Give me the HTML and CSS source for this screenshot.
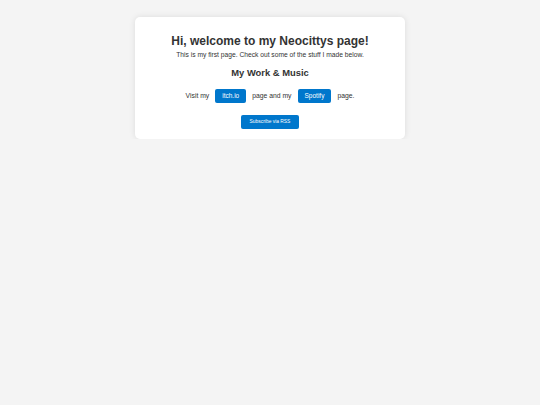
FILE: index.html
```html
<!DOCTYPE html>
<html lang="en">
<head>
<meta charset="utf-8">
<title>Neocittys</title>
<link rel="stylesheet" href="styles.css">
</head>
<body>
<main class="card">
  <h1 class="title">Hi, welcome to my Neocittys page!</h1>
  <p class="intro">This is my first page. Check out some of the stuff I made below.</p>
  <h2 class="subtitle">My Work &amp; Music</h2>
  <div class="links">
    <span>Visit my</span>
    <a class="btn" href="#">itch.io</a>
    <span>page and my</span>
    <a class="btn" href="#">Spotify</a>
    <span>page.</span>
  </div>
  <div class="rss-row">
    <a class="btn-rss" href="#">Subscribe via RSS</a>
  </div>
</main>
</body>
</html>
```
FILE: styles.css
```css
html, body {
  margin: 0;
  padding: 0;
}
body {
  background: #f4f4f4;
  color: #333;
  font-family: "Liberation Sans", Arial, sans-serif;
  padding-top: 17px;
}
.card {
  width: 270px;
  margin: 0 auto;
  background: #fff;
  border-radius: 5px;
  box-shadow: 0 0 6px rgba(0, 0, 0, 0.1);
  text-align: center;
  padding: 16.5px 0 10.3px;
  display: flex;
  flex-direction: column;
  align-items: center;
}
.title {
  margin: 0;
  font-size: 12px;
  line-height: 14px;
  font-weight: bold;
}
.intro {
  margin: 3.7px 0 0;
  font-size: 6.7px;
  line-height: 8px;
}
.subtitle {
  margin: 8px 0 0;
  font-size: 9.4px;
  line-height: 11px;
  font-weight: bold;
}
.links {
  margin-top: 10.5px;
  display: flex;
  align-items: center;
  justify-content: center;
  gap: 6px;
  font-size: 6.8px;
}
.btn {
  display: block;
  background: #0077cc;
  color: #fff;
  text-decoration: none;
  font-size: 6.5px;
  line-height: 14px;
  height: 14px;
  padding: 0 7px;
  border-radius: 2px;
}
.rss-row {
  margin-top: 12.6px;
  display: flex;
  justify-content: center;
}
.btn-rss {
  display: block;
  background: #0077cc;
  color: #fff;
  text-decoration: none;
  font-size: 4.9px;
  line-height: 13.4px;
  height: 13.4px;
  padding: 0 8.3px;
  border-radius: 2px;
}
```
